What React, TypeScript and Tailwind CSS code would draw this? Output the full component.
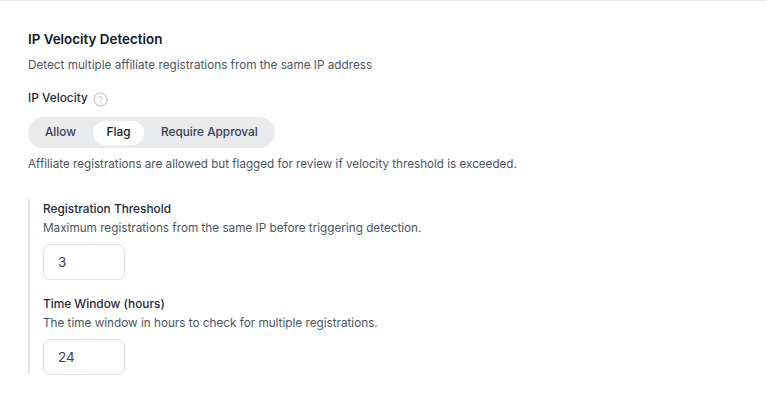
function Field({ label, help, value, className }: { label: string; help: string; value: string; className?: string }) {
  return (
    <div className={className}>
      <p className="pt-[1px] text-[11.85px] leading-[18px] font-medium text-[#1f2937]">{label}</p>
      <p className="mt-[1px] text-[11.72px] leading-[18px] text-[#4b5563]">{help}</p>
      <div className="mt-[7px] w-[82px] h-[36px] border border-[#dcdfe4] rounded-lg bg-white flex items-center pl-[14px] text-[13.5px] text-[#374151]">{value}</div>
    </div>
  );
}

export default function App() {
  return (
    <div className="w-[767px] h-[402px] bg-white border-t border-[#e5e7eb] font-['Inter',sans-serif] pl-7 pt-[29px]">
      <h2 className="text-[13.4px] leading-[18px] font-semibold text-[#111827]">IP Velocity Detection</h2>
      <p className="mt-[8px] text-[11.72px] leading-[18px] text-[#4b5563]">Detect multiple affiliate registrations from the same IP address</p>
      <div className="mt-[13px] flex items-center gap-[5px] h-[24px]">
        <span className="text-[11.85px] font-medium text-[#1f2937]">IP Velocity</span>
        <svg width="15" height="15" viewBox="0 0 24 24" fill="none" stroke="#b0b4bb" strokeWidth="1.4" strokeLinecap="round" strokeLinejoin="round">
          <circle cx="12" cy="12" r="10.5" />
          <path d="M9.3 9.2a2.8 2.8 0 0 1 5.4 1c0 1.9-2.7 2.6-2.7 4" />
          <path d="M12 17.5h.01" />
        </svg>
      </div>
      <div className="mt-[6px] w-[247px] h-[31px] rounded-full bg-[#e9ebed] flex items-center pl-[17px] text-[11.8px] font-medium text-[#374151]">
        <span className="w-[48px]">Allow</span>
        <span className="w-[51px] h-[24px] flex items-center justify-center rounded-full bg-white text-[#111827]">Flag</span>
        <span className="ml-[17px]">Require Approval</span>
      </div>
      <p className="mt-[7px] text-[11.66px] leading-[18px] text-[#4b5563]">Affiliate registrations are allowed but flagged for review if velocity threshold is exceeded.</p>
      <div className="mt-[26px] border-l-2 border-[#e5e7eb] pl-[13px] h-[175px]">
        <Field label="Registration Threshold" help="Maximum registrations from the same IP before triggering detection." value="3" />
        <Field className="mt-[14px]" label="Time Window (hours)" help="The time window in hours to check for multiple registrations." value="24" />
      </div>
    </div>
  );
}
